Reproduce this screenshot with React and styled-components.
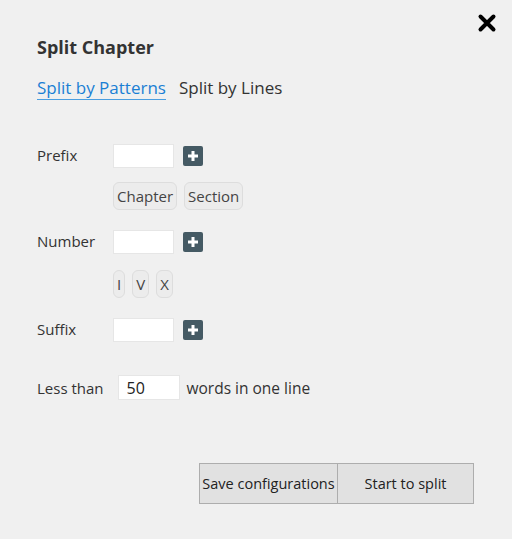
import React, { useState } from 'react';
import styled, { createGlobalStyle } from 'styled-components';

const GlobalStyle = createGlobalStyle`
  html, body {
    margin: 0;
    padding: 0;
    background: #f0f0f0;
  }
  body {
    font-family: "Open Sans", "Noto Sans", sans-serif;
    color: #333;
  }
`;

const Dialog = styled.div`
  position: relative;
  width: 512px;
  height: 539px;
  box-sizing: border-box;
  padding: 35px 37px 0 37px;
  background: #f0f0f0;
`;

const Close = styled.button`
  position: absolute;
  top: 11px;
  right: 13px;
  width: 24px;
  height: 24px;
  padding: 0;
  border: none;
  background: none;
  cursor: pointer;
`;

const Title = styled.h2`
  margin: 0;
  font-size: 18px;
  font-weight: 700;
  line-height: 25px;
  color: #333;
`;

const Tabs = styled.div`
  display: flex;
  gap: 13px;
  margin-top: 16px;
`;

const Tab = styled.span`
  font-size: 17px;
  line-height: 23px;
  color: ${(p) => (p.active ? '#1a7fd4' : '#333')};
  border-bottom: 1px solid ${(p) => (p.active ? '#4a9ee0' : 'transparent')};
  cursor: pointer;
`;

const Form = styled.div`
  margin-top: 44px;
`;

const Field = styled.div`
  display: flex;
  align-items: center;
  margin-top: ${(p) => p.top || 0}px;
`;

const Label = styled.span`
  width: 76px;
  font-size: 15px;
  line-height: 20px;
  color: #333;
  margin-top: -3px;
`;

const Input = styled.input`
  width: 61px;
  height: 24px;
  box-sizing: border-box;
  border: 1px solid #e6e6e6;
  background: #fff;
  padding: 0 8px;
  font: inherit;
  font-size: 16px;
  color: #222;
  outline: none;
`;

const Plus = styled.button`
  width: 20px;
  height: 20px;
  margin-left: 9px;
  padding: 0;
  border: none;
  border-radius: 2px;
  background: #455a64;
  display: flex;
  align-items: center;
  justify-content: center;
  cursor: pointer;
`;

const Chips = styled.div`
  display: flex;
  gap: 7px;
  margin: ${(p) => p.top}px 0 0 76px;
`;

const Chip = styled.button`
  height: 28px;
  box-sizing: border-box;
  padding: 0 3px;
  border: 1px solid #ddd;
  border-radius: 6px;
  background: #ececec;
  font: inherit;
  font-size: 15px;
  color: #444;
  cursor: pointer;
`;

const LineRow = styled.div`
  display: flex;
  align-items: center;
  gap: 7px;
  margin-top: 33px;
  font-size: 15px;
  color: #333;
`;

const Words = styled.span`
  font-size: 15.5px;
`;

const LinesInput = styled(Input)`
  width: 62px;
  height: 25px;
  margin-left: 7px;
`;

const Actions = styled.div`
  display: flex;
  justify-content: flex-end;
  margin-top: 63px;
  padding-right: 1px;
`;

const ActionButton = styled.button`
  height: 41px;
  width: ${(p) => p.w}px;
  box-sizing: border-box;
  border: 1px solid #adadad;
  background: #e1e1e1;
  font: inherit;
  font-size: 14.5px;
  color: #222;
  padding: 0;
  cursor: pointer;
  & + & {
    margin-left: -1px;
  }
`;

function PlusIcon() {
  return (
    <svg width="12" height="12" viewBox="0 0 12 12">
      <path d="M6 1v10M1 6h10" stroke="#fff" strokeWidth="3" />
    </svg>
  );
}

function PatternField({ label, top, chips, chipTop }) {
  return (
    <>
      <Field top={top}>
        <Label>{label}</Label>
        <Input />
        <Plus><PlusIcon /></Plus>
      </Field>
      {chips && (
        <Chips top={chipTop}>
          {chips.map((c) => <Chip key={c}>{c}</Chip>)}
        </Chips>
      )}
    </>
  );
}

export default function App() {
  const [tab, setTab] = useState('patterns');
  return (
    <>
      <GlobalStyle />
      <Dialog>
        <Close aria-label="close">
          <svg width="24" height="24" viewBox="0 0 24 24">
            <path d="M5.5 5.5L18.5 18.5M18.5 5.5L5.5 18.5" stroke="#000" strokeWidth="4" strokeLinecap="round" />
          </svg>
        </Close>
        <Title>Split Chapter</Title>
        <Tabs>
          <Tab active={tab === 'patterns'} onClick={() => setTab('patterns')}>Split by Patterns</Tab>
          <Tab active={tab === 'lines'} onClick={() => setTab('lines')}>Split by Lines</Tab>
        </Tabs>
        <Form>
          <PatternField label="Prefix" chips={['Chapter', 'Section']} chipTop={14} />
          <PatternField label="Number" top={20} chips={['I', 'V', 'X']} chipTop={16} />
          <PatternField label="Suffix" top={20} />
          <LineRow>
            <span>Less than</span>
            <LinesInput defaultValue="50" />
            <Words>words in one line</Words>
          </LineRow>
        </Form>
        <Actions>
          <ActionButton w={139}>Save configurations</ActionButton>
          <ActionButton w={137}>Start to split</ActionButton>
        </Actions>
      </Dialog>
    </>
  );
}
